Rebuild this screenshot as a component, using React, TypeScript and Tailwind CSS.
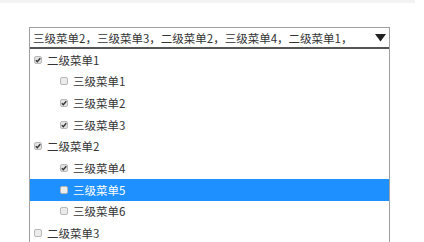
import React from "react";

type Row = { label: string; level: 2 | 3; checked: boolean; active?: boolean };

const rows: Row[] = [
  { label: "二级菜单1", level: 2, checked: true },
  { label: "三级菜单1", level: 3, checked: false },
  { label: "三级菜单2", level: 3, checked: true },
  { label: "三级菜单3", level: 3, checked: true },
  { label: "二级菜单2", level: 2, checked: true },
  { label: "三级菜单4", level: 3, checked: true },
  { label: "三级菜单5", level: 3, checked: false, active: true },
  { label: "三级菜单6", level: 3, checked: false },
  { label: "二级菜单3", level: 2, checked: false },
];

function Check({ checked }: { checked: boolean }) {
  return (
    <svg width="8" height="8" viewBox="0 0 8 8" className="shrink-0">
      <rect x="0.5" y="0.5" width="7" height="7" rx="1.5" fill={checked ? "#e2e2e2" : "#ececec"} stroke="#b8b8b8" />
      {checked && <path d="M1.8 4.2 L3.3 5.7 L6.3 2.2" fill="none" stroke="#333" strokeWidth="1.4" />}
    </svg>
  );
}

export default function App() {
  return (
    <div
      className="w-[424px] h-[242px] overflow-hidden bg-white text-[11.5px] text-[#333]"
      style={{ fontFamily: '"Noto Sans CJK SC", "Noto Sans", sans-serif' }}
    >
      <div className="h-[3px] w-[415px] bg-[#f3f3f3]" />
      <div className="ml-[29px] mt-[24px] w-[361px] border border-[#a0a0a0] border-b-0">
        <div className="h-[21px] flex items-center pl-[3px] pr-[2px] border-b-2 border-[#555]">
          <span className="flex-1 min-w-0 whitespace-nowrap leading-[16px]">
            三级菜单2，三级菜单3，二级菜单2，三级菜单4，二级菜单1，
          </span>
          <svg width="11" height="8" viewBox="0 0 11 8" className="shrink-0 mr-[1px]">
            <path d="M0 0 H11 L5.5 7.5 Z" fill="#222" />
          </svg>
        </div>
        <div>
          {rows.map((r) => (
            <div
              key={r.label}
              className={
                "h-[21.67px] flex items-center gap-[5px] " +
                (r.level === 2 ? "pl-[4px] " : "pl-[30px] ") +
                (r.active ? "bg-[#1e90ff] text-white" : "")
              }
            >
              <Check checked={r.checked} />
              <span className="leading-[16px]">{r.label}</span>
            </div>
          ))}
        </div>
      </div>
    </div>
  );
}
